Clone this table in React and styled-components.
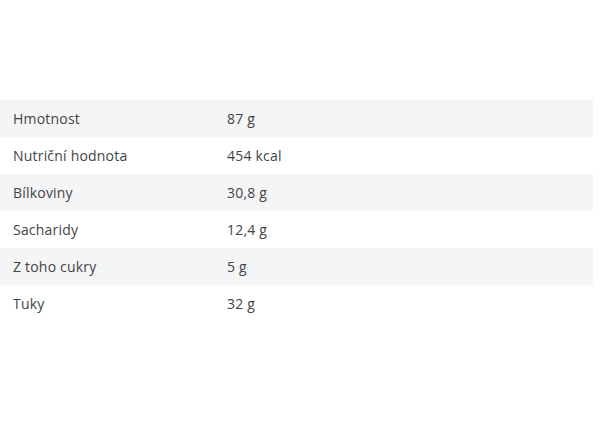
import React from "react";
import styled, { createGlobalStyle } from "styled-components";

const GlobalStyle = createGlobalStyle`
  html, body {
    margin: 0;
    padding: 0;
    background: #ffffff;
  }
  body {
    font-family: "Open Sans", "Liberation Sans", sans-serif;
  }
`;

const rows = [
  { label: "Hmotnost", value: "87 g" },
  { label: "Nutriční hodnota", value: "454 kcal" },
  { label: "Bílkoviny", value: "30,8 g" },
  { label: "Sacharidy", value: "12,4 g" },
  { label: "Z toho cukry", value: "5 g" },
  { label: "Tuky", value: "32 g" },
];

export default function App() {
  return (
    <>
      <GlobalStyle />
      <Page>
        <Table>
          <tbody>
            {rows.map((row, i) => (
              <Row key={row.label} $striped={i % 2 === 0}>
                <LabelCell>{row.label}</LabelCell>
                <ValueCell>{row.value}</ValueCell>
              </Row>
            ))}
          </tbody>
        </Table>
      </Page>
    </>
  );
}

const Page = styled.div`
  width: 600px;
  height: 440px;
  padding-top: 100px;
  box-sizing: border-box;
`;

const Table = styled.table`
  width: 593px;
  border-collapse: collapse;
  table-layout: fixed;
`;

const Row = styled.tr`
  height: 37px;
  background-color: ${(props) => (props.$striped ? "#f4f5f7" : "#ffffff")};
`;

const LabelCell = styled.td`
  width: 214px;
  padding: 0 0 1px 13px;
  font-size: 14px;
  letter-spacing: 0.2px;
  color: #444444;
  vertical-align: middle;
`;

const ValueCell = styled.td`
  padding: 0 0 1px 0;
  font-size: 14px;
  letter-spacing: 0.2px;
  color: #444444;
  vertical-align: middle;
`;
